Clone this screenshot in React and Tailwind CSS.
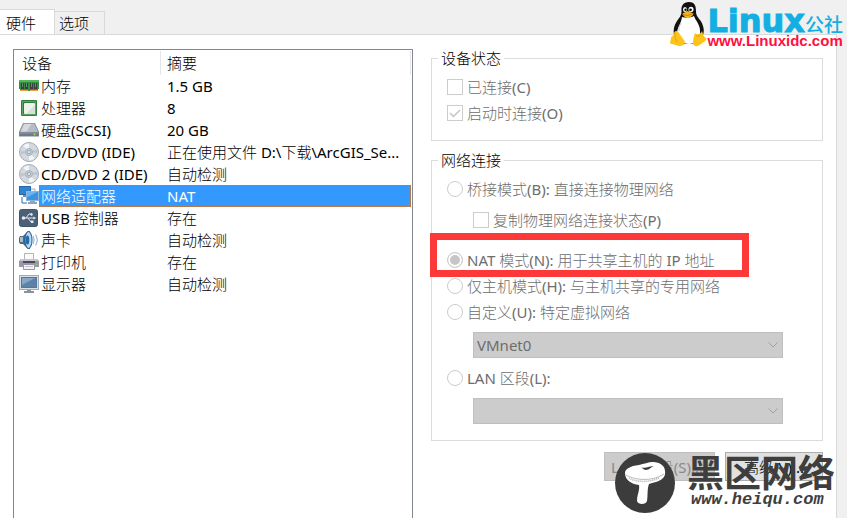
const MemoryIcon = () => (
  <svg viewBox="0 0 20 16" className="w-5 h-4 shrink-0">
    <path d="M0 2h20v9h-1v2H1v-2H0z" fill="#2f8f3a" />
    <path d="M0 2h20v2H0z" fill="#57b560" />
    <path d="M2 5h3v6H2zM6 5h3v6H6zM11 5h3v6h-3zM15 5h3v6h-3z" fill="#3b3f42" />
    <path d="M3 5h1v4H3zM7 5h1v4H7zM12 5h1v4h-1zM16 5h1v4h-1z" fill="#777d80" />
    <path d="M1 12h8v1H1zM11 12h8v1h-8z" fill="#e9a44a" />
  </svg>
);

const CpuIcon = () => (
  <svg viewBox="0 0 20 20" className="size-5 shrink-0">
    <rect x="2" y="2" width="16" height="16" rx="1" fill="#2c8238" />
    <rect x="3" y="3" width="14" height="14" fill="#5aa85f" />
    <rect x="4" y="4" width="12" height="12" fill="#2f7d39" />
    <rect x="5" y="5" width="11" height="11" rx="1" fill="#eef1ee" />
    <path d="M16 7v9H7z" fill="#d9dedb" />
  </svg>
);

const DiskIcon = () => (
  <svg viewBox="0 0 20 20" className="size-5 shrink-0">
    <path d="M4 3h12l4 9v4.500H0V12z" fill="#7b858f" />
    <path d="M4.500 3.500h11l3.500 8.500H1z" fill="#b5bcc5" />
    <path d="M5.500 4h7l-5 7.500H2z" fill="#d6dae0" />
    <path d="M1 12.500h18V16H1z" fill="#6d7985" />
    <path d="M1 12.500h18v1H1z" fill="#929da8" />
    <circle cx="15.500" cy="14.500" r="1" fill="#9ee04b" />
  </svg>
);

const DiscIcon = () => (
  <svg viewBox="0 0 20 20" className="size-5 shrink-0">
    <circle cx="10" cy="10" r="9.500" fill="#d3d9df" stroke="#a3abb2" />
    <path d="M10 10 4.200 3.500A8.500 8.500 0 0 1 10 1.500zM10 10l5.800 6.500A8.500 8.500 0 0 1 10 18.500z" fill="#f2f5f7" />
    <path d="M10 10 18 7.500A8.500 8.500 0 0 1 18.400 11zM10 10 2 12.500A8.500 8.500 0 0 1 1.600 9z" fill="#bcc6ce" />
    <circle cx="10" cy="10" r="3.500" fill="#c3cdd7" stroke="#a6b2bd" />
    <circle cx="10" cy="10" r="1.500" fill="#fff" stroke="#93a0ad" />
  </svg>
);

const NetworkIcon = () => (
  <svg viewBox="0 0 20 20" className="size-5 shrink-0">
    <rect x="0.500" y="0.500" width="11" height="8" fill="#2f83cf" stroke="#2468ab" />
    <path d="M4 9h4v2H4z" fill="#6f8ba5" />
    <path d="M3 11v6h5" fill="none" stroke="#2c6ca9" />
    <path d="M12 3h4v3" fill="none" stroke="#9aabba" />
    <rect x="7.500" y="5.500" width="12" height="9" fill="#3b94de" stroke="#8fb4d6" />
    <path d="M8 6h10l-9 5H8z" fill="#6bb4ef" />
    <path d="M11 15h5v1h2v2H9v-2h2z" fill="#8fa5b9" />
  </svg>
);

const UsbIcon = () => (
  <svg viewBox="0 0 20 20" className="size-5 shrink-0">
    <rect x="0.500" y="1.500" width="18" height="17" rx="2" fill="#4a6076" stroke="#40566b" />
    <path d="M4 10h12M7 10l3-4h3M9 10l3 4h2" fill="none" stroke="#e6ebef" />
    <circle cx="4.500" cy="10" r="1.800" fill="#e6ebef" />
    <circle cx="12.500" cy="6.500" r="1.200" fill="#e6ebef" />
    <path d="M14.500 8.500l2.500 1.500-2.500 1.500zM12 12.500h2.500V15H12z" fill="#e6ebef" />
  </svg>
);

const SoundIcon = () => (
  <svg viewBox="0 0 20 20" className="size-5 shrink-0">
    <path d="M1 6h3l5-5h2v18H9l-5-5H1L0 12V8z" fill="#4b6a8a" />
    <path d="M1 7h3v5H1z" fill="#a9bccd" />
    <ellipse cx="9.500" cy="10" rx="3.500" ry="8.500" fill="#b7d8f2" stroke="#2d5580" />
    <ellipse cx="8.500" cy="10" rx="1.800" ry="4.500" fill="#1f6bb2" />
    <path d="M14 6q2 4 0 8M16.500 4.500q3.500 5.500 0 11" fill="none" stroke="#9bbad6" strokeWidth="1.200" />
  </svg>
);

const PrinterIcon = () => (
  <svg viewBox="0 0 20 20" className="size-5 shrink-0">
    <path d="M5.500 1.500h9V8h-9z" fill="#fbfbfc" stroke="#b3b2bc" />
    <path d="M2 7h16l2 2v6H0V9z" fill="#9a98a6" />
    <path d="M2 7h16l1 2H1z" fill="#c7c5d0" />
    <path d="M4 9h12v2H4z" fill="#4b4957" />
    <path d="M4.500 12.500h11v5h-11z" fill="#f3f3f6" stroke="#9794a3" />
    <path d="M6 14.500h8" stroke="#c3c2cb" />
    <path d="M17 12h2v1h-2z" fill="#7bd35a" />
  </svg>
);

const DisplayIcon = () => (
  <svg viewBox="0 0 20 20" className="size-5 shrink-0">
    <rect x="0.500" y="1.500" width="19" height="14" fill="#d9dfe4" stroke="#a1acb6" />
    <rect x="2.500" y="3.500" width="15" height="10" fill="#5c82a8" stroke="#56779a" />
    <path d="M3 4h13L3 11z" fill="#86a7c6" />
    <path d="M8 16h4v1h3v2H5v-2h3z" fill="#8794a0" />
  </svg>
);

const devices = [
  { name: '内存', summary: '1.5 GB', Icon: MemoryIcon },
  { name: '处理器', summary: '8', Icon: CpuIcon },
  { name: '硬盘(SCSI)', summary: '20 GB', Icon: DiskIcon },
  { name: 'CD/DVD (IDE)', summary: '正在使用文件 D:\\下载\\ArcGIS_Se...', Icon: DiscIcon },
  { name: 'CD/DVD 2 (IDE)', summary: '自动检测', Icon: DiscIcon },
  { name: '网络适配器', summary: 'NAT', Icon: NetworkIcon, selected: true },
  { name: 'USB 控制器', summary: '存在', Icon: UsbIcon },
  { name: '声卡', summary: '自动检测', Icon: SoundIcon },
  { name: '打印机', summary: '存在', Icon: PrinterIcon },
  { name: '显示器', summary: '自动检测', Icon: DisplayIcon },
];

const DeviceTable = () => (
  <table className="w-full table-fixed border-collapse text-left text-black">
    <thead>
      <tr className="h-[25px]">
        <th className="w-[147px] p-0 font-normal">
          <div className="h-6 leading-6 pl-2 border-r border-[#e5e5e5]">设备</div>
        </th>
        <th className="p-0 font-normal">
          <div className="h-6 leading-6 pl-1.5 mr-px border-r border-[#e5e5e5]">摘要</div>
        </th>
      </tr>
    </thead>
    <tbody>
      {devices.map(({ name, summary, Icon, selected }) => (
        <tr key={name} className="h-[22px]">
          <td className="p-0">
            <div className="flex items-center pl-[5px] h-[22px]">
              <Icon />
              <div
                className={`flex-1 h-[22px] whitespace-nowrap ${
                  selected
                    ? 'pl-px leading-5 bg-[#3399ff] text-white border-y border-l border-dotted border-[#b87a4a]'
                    : 'pl-0.5 leading-[22px]'
                }`}
              >
                {name}
              </div>
            </div>
          </td>
          <td className="p-0">
            <div
              className={`h-[22px] pl-1.5 truncate ${
                selected
                  ? 'mr-px leading-5 bg-[#3399ff] text-white border-y border-r border-dotted border-[#b87a4a]'
                  : 'leading-[22px]'
              }`}
            >
              {summary}
            </div>
          </td>
        </tr>
      ))}
    </tbody>
  </table>
);

const Group = ({ title, className, children }) => (
  <fieldset className={`border border-[#dcdcdc] pl-[15px] pr-[39px] ${className}`}>
    <legend className="-ml-[9px] px-[3px] h-5 leading-5 text-black">{title}</legend>
    {children}
  </fieldset>
);

const Check = ({ label, checked = false }) => (
  <label className="flex items-center gap-1 h-[26px] whitespace-nowrap">
    <span className="grid shrink-0">
      <input
        type="checkbox"
        disabled
        defaultChecked={checked}
        className="col-start-1 row-start-1 appearance-none size-4 border border-[#cccccc] bg-white"
      />
      {checked && (
        <svg viewBox="0 0 16 16" className="col-start-1 row-start-1 size-4">
          <path d="M3 8l3.500 3.500L13 5" fill="none" stroke="#c4c4c4" strokeWidth="1.500" />
        </svg>
      )}
    </span>
    {label}
  </label>
);

const Radio = ({ label, checked = false }) => (
  <label className="flex items-center gap-1 h-[26px] whitespace-nowrap">
    <input
      type="radio"
      name="network"
      disabled
      defaultChecked={checked}
      className="appearance-none shrink-0 size-4 rounded-full border border-[#cccccc] bg-white checked:bg-[#c6c6c6] checked:shadow-[inset_0_0_0_2px_white]"
    />
    {label}
  </label>
);

const DropDown = ({ label, value }) => (
  <div className="grid items-center ml-[26px]">
    <select
      aria-label={label}
      disabled
      className="col-start-1 row-start-1 appearance-none w-full h-[26px] pl-[3px] border border-[#bfbfbf] bg-[#cccccc] text-[#6d6d6d] opacity-100"
    >
      {value && <option>{value}</option>}
    </select>
    <svg
      viewBox="0 0 10 6"
      className="col-start-1 row-start-1 justify-self-end mr-[5px] w-2.5 h-1.5 pointer-events-none"
    >
      <path d="M0.500 0.500 5 5 9.500 0.500" fill="none" stroke="#a0a0a0" />
    </svg>
  </div>
);

const LinuxLogo = () => (
  <div className="absolute top-0 right-0 flex pr-1 pt-px">
    <svg viewBox="0 0 38 46" className="w-[38px] h-[46px]">
      <path
        d="M20 1c-6 0-8 4-7.500 9 0 5-2 6-4.500 10-3 4-4 9-3 14l8 9h13l8-9c2-5 0-11-3-15-3-4-4-5-4-9 0-6-2-9-7-9z"
        fill="#111"
      />
      <path d="M13 16c4 1 8 1 12-1 1 4 7 9 6 17 0 7-4 11-11 11s-12-5-12-11c0-5 4-9 5-16z" fill="#fff" />
      <path d="M12 22q-3 4-2 8" fill="none" stroke="#bbb" strokeWidth="0.800" />
      <ellipse cx="16" cy="8.500" rx="2" ry="2.600" fill="#fff" />
      <ellipse cx="22" cy="8.500" rx="2.500" ry="2.800" fill="#fff" />
      <circle cx="16.500" cy="8.800" r="1.200" fill="#111" />
      <circle cx="21.500" cy="8.800" r="1.400" fill="#111" />
      <path d="M13.500 12.500l5-2.500 6 2.500c0 2-4 4.500-6 4.500s-5-2.500-5-4.500z" fill="#f7b516" />
      <path d="M13.500 13.500q5 2.500 10.500-1" fill="none" stroke="#b26c05" strokeWidth="0.700" />
      <path d="M7 30c3 0 5 6 8 9 2 3 0 6-4 6-3 0-6-2-9-2-2-1 0-4 0-6s3-2 3-4 1-3 2-3z" fill="#fcc419" />
      <path d="M26 32c2 2 5 2 7-2 1 3 1 5 4 7 2 2-3 4-5 6-3 3-8 3-8-1s1-7 2-10z" fill="#fcc419" />
      <path d="M6 32q-1 5 2 9M27 35q3 1 5-1" fill="none" stroke="#e09a0b" strokeWidth="0.800" />
    </svg>
    <div className="pt-[7px]">
      <div className="flex items-start h-[26px] whitespace-nowrap">
        <span className="font-['DejaVu_Sans',sans-serif] font-bold text-[32px] leading-[26px] text-[#14afe2] [-webkit-text-stroke:1px_#14afe2]">
          Linux
        </span>
        <span className="font-['Noto_Sans_CJK_SC',sans-serif] font-medium text-[19px] leading-8 text-[#14afe2]">
          公社
        </span>
      </div>
      <div className="font-['Liberation_Sans',sans-serif] font-bold text-[15px] leading-[14px] text-[#ff1040]">
        www.Linuxidc.com
      </div>
    </div>
  </div>
);

const HeiquLogo = () => (
  <div className="absolute right-0 top-[452px] flex gap-3 pr-3 text-[#3e3e3e]">
    <svg viewBox="0 0 62 62" className="size-[62px]">
      <circle cx="32" cy="31" r="30" fill="#3c3c3c" />
      <path
        d="M12 21c0-4 5-7 14-8 5-1 9-3 14-3 7 0 12 4 12 9 1 6-3 9-9 11-3 1-5 1-7 2-2 5-1 12-2 17-1 4-9 4-10 0 0-6 3-11 2-16-8-1-14-5-14-12z"
        fill="#fff"
      />
      <path d="M13 23c6 4 24 8 38-1" fill="none" stroke="#999" strokeWidth="0.700" />
      <path d="M16 26c6 4 19 5 30 0" fill="none" stroke="#aaa" strokeWidth="1.500" strokeDasharray="1 1" />
      <path d="M27 15c3 2 6 0 14-1-3 1-5 4-8 4-2 0-3-2-6-3z" fill="#3c3c3c" />
    </svg>
    <div className="whitespace-nowrap">
      <div className="font-['Noto_Sans_CJK_SC',sans-serif] font-bold text-[37px] leading-[38px]">黑区网络</div>
      <div className="pl-1 font-['Liberation_Mono',monospace] font-bold italic text-[17px] leading-5">
        www.heiqu.com
      </div>
    </div>
  </div>
);

export default function App() {
  return (
    <div className="relative min-h-screen flex flex-col overflow-hidden bg-[#f0f0f0] font-['Noto_Sans','Noto_Sans_CJK_SC_Light','Noto_Sans_CJK_SC',sans-serif] text-[15px] leading-5">
      <div role="tablist" className="flex items-end pt-[9px]">
        <button
          type="button"
          role="tab"
          aria-selected="true"
          className="w-[55px] h-[26px] -mb-px pl-1.5 text-left leading-5 bg-white border-t border-r border-[#d9d9d9]"
        >
          硬件
        </button>
        <button
          type="button"
          role="tab"
          aria-selected="false"
          className="w-[50px] h-[23px] pl-1 text-left border-t border-r border-[#d9d9d9]"
        >
          选项
        </button>
      </div>
      <div className="flex-1 flex mr-2.5 px-[13px] bg-white border-t border-r border-[#d9d9d9]">
        <section className="w-[400px] shrink-0 mt-[14px] border-x border-t border-[#828790]">
          <DeviceTable />
        </section>
        <section className="flex-1 min-w-0 ml-[18px] mt-[13px] text-[#6d6d6d]">
          <Group title="设备状态" className="h-[93px]">
            <div className="pt-[6px]">
              <Check label="已连接(C)" />
              <Check label="启动时连接(O)" checked />
            </div>
          </Group>
          <Group title="网络连接" className="mt-[9px] pb-4">
            <div className="pt-[6px]">
              <Radio label="桥接模式(B): 直接连接物理网络" />
              <div className="ml-[26px] mt-[5px]">
                <Check label="复制物理网络连接状态(P)" />
              </div>
              <div className="relative mt-[14px]">
                <Radio label="NAT 模式(N): 用于共享主机的 IP 地址" checked />
                <div className="absolute -left-[17px] -top-[14px] w-[319px] h-11 border-[7px] border-[#fc3838] pointer-events-none" />
              </div>
              <Radio label="仅主机模式(H): 与主机共享的专用网络" />
              <Radio label="自定义(U): 特定虚拟网络" />
              <div className="mt-[7px]">
                <DropDown label="特定虚拟网络" value="VMnet0" />
              </div>
              <div className="my-[7px]">
                <Radio label="LAN 区段(L):" />
              </div>
              <DropDown label="LAN 区段" />
            </div>
          </Group>
          <div className="flex justify-end gap-2.5 mt-[11px]">
            <button
              type="button"
              disabled
              className="w-[111px] h-[29px] pl-1.5 text-left bg-[#cccccc] border border-[#bfbfbf] text-[#8a8a8a]"
            >
              LAN 区段(S)...
            </button>
            <button type="button" className="w-[98px] h-[29px] bg-[#e1e1e1] border border-[#adadad] text-black">
              高级(V)...
            </button>
          </div>
        </section>
      </div>
      <LinuxLogo />
      <HeiquLogo />
    </div>
  );
}
